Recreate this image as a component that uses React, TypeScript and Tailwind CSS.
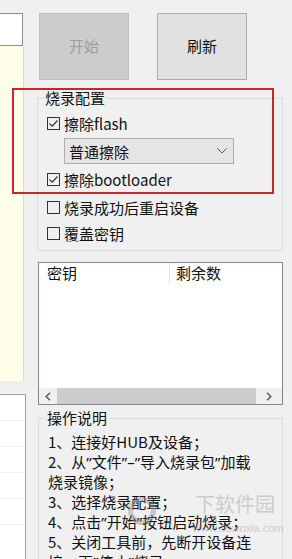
import React from "react";

const font = { fontFamily: '"Noto Sans CJK SC", "Noto Sans", sans-serif' };
const latin = { fontFamily: '"Noto Sans", "Liberation Sans", sans-serif' };

const Check = ({ checked }: { checked?: boolean }) => (
  <svg width="13" height="13" viewBox="0 0 13 13" className="shrink-0">
    <rect x="0.5" y="0.5" width="12" height="12" fill="none" stroke="#333" strokeWidth="1" />
    {checked && <path d="M2.5 6.5 L5.2 9.2 L10.5 3.5" fill="none" stroke="#333" strokeWidth="1.2" />}
  </svg>
);

const Row = ({ label, checked, h }: { label: string; checked?: boolean; h: string }) => (
  <div className={`flex items-center gap-[4px] pl-[9px] shrink-0 ${h}`}>
    <Check checked={checked} />
    <span className="text-[15px] leading-none text-[#111]">{label}</span>
  </div>
);

// narrow quote / dash like the original UI font
const Q = ({ c }: { c: string }) => <span style={latin}>{c}</span>;

export default function App() {
  return (
    <div
      className="w-[292px] h-[559px] bg-[#f0f0f0] flex overflow-hidden relative text-[15px] text-[#111]"
      style={font}
    >
      {/* left strip */}
      <div className="w-[26px] flex flex-col shrink-0">
        <div className="h-[13px] shrink-0" />
        <div className="h-[33px] w-[23px] shrink-0 bg-white border border-l-0 border-[#8c8c8c]" />
        <div className="h-[335px] w-[24px] shrink-0 bg-[#fffee8] border-r border-[#dadada]" />
        <div className="h-[13px] shrink-0" />
        <div className="flex-1 w-[26px] bg-white border-t border-r border-[#a0a0a0] flex flex-col">
          <div className="h-[26px] shrink-0 border-b border-[#f0f0f0]" />
          <div className="h-[26px] shrink-0 border-b border-[#f0f0f0]" />
          <div className="h-[26px] shrink-0 border-b border-[#f0f0f0]" />
          <div className="h-[26px] shrink-0 border-b border-[#f0f0f0]" />
          <div className="h-[26px] shrink-0 border-b border-[#f0f0f0]" />
        </div>
      </div>

      {/* right side */}
      <div className="flex-1 flex flex-col">
        <div className="h-[13px] shrink-0" />
        <div className="flex gap-[28px] pl-[13px] shrink-0">
          <div className="w-[90px] h-[67px] bg-[#cccccc] border border-[#bfbfbf] flex items-center justify-center text-[#9d9d9d]">
            开始
          </div>
          <div className="w-[90px] h-[67px] bg-[#e1e1e1] border border-[#adadad] flex items-center justify-center">
            刷新
          </div>
        </div>

        {/* 烧录配置 group */}
        <div className="relative shrink-0 mt-[18px] ml-[11px] w-[246px] h-[153px] border border-[#dcdcdc] flex flex-col">
          <span className="absolute left-[6px] top-[-10px] bg-[#f0f0f0] px-[1px] leading-[18px]">烧录配置</span>
          <div className="h-[12px] shrink-0" />
          <Row label="擦除flash" checked h="h-[24px]" />
          <div className="shrink-0 mt-[3px] ml-[26px] w-[170px] h-[26px] bg-[#e5e5e5] border border-[#acacac] flex items-center justify-between pl-[4px] pr-[6px]">
            <span className="leading-none">普通擦除</span>
            <svg width="10" height="6" viewBox="0 0 10 6">
              <path d="M0.5 0.5 L5 5 L9.5 0.5" fill="none" stroke="#555" strokeWidth="1" />
            </svg>
          </div>
          <div className="h-[3px] shrink-0" />
          <Row label="擦除bootloader" checked h="h-[24px]" />
          <div className="h-[4px] shrink-0" />
          <Row label="烧录成功后重启设备" h="h-[24px]" />
          <div className="h-[2px] shrink-0" />
          <Row label="覆盖密钥" h="h-[24px]" />
        </div>

        {/* list view */}
        <div className="shrink-0 mt-[11px] ml-[12px] w-[245px] h-[143px] bg-white border border-[#828790] flex flex-col">
          <div className="h-[21px] flex items-center shrink-0">
            <div className="w-[131px] pl-[8px] border-r border-[#e5e5e5] h-full flex items-center">密钥</div>
            <div className="pl-[6px]">剩余数</div>
          </div>
          <div className="flex-1" />
          <div className="h-[16px] shrink-0 bg-[#f0f0f0] flex items-center">
            <div className="w-[18px] flex items-center justify-center">
              <svg width="6" height="9" viewBox="0 0 6 9">
                <path d="M5 0.8 L1.2 4.5 L5 8.2" fill="none" stroke="#606060" strokeWidth="1.6" />
              </svg>
            </div>
            <div className="flex-1 h-full bg-[#cdcdcd]" />
            <div className="w-[26px] flex items-center justify-center">
              <svg width="6" height="9" viewBox="0 0 6 9">
                <path d="M1 0.8 L4.8 4.5 L1 8.2" fill="none" stroke="#606060" strokeWidth="1.6" />
              </svg>
            </div>
          </div>
        </div>

        {/* 操作说明 group */}
        <div className="relative shrink-0 mt-[13px] ml-[12px] w-[245px] h-[160px] border border-b-0 border-[#dcdcdc]">
          <span className="absolute left-[7px] top-[-10px] bg-[#f0f0f0] px-[1px] leading-[18px]">操作说明</span>
          <div className="pt-[13px] pl-[9px] leading-[20px] whitespace-nowrap">
            <div>1、连接好HUB及设备；</div>
            <div>
              2、从<Q c={"\u201D"} />文件<Q c={"\u201D"} />
              <Q c={"\u2013"} />
              <Q c={"\u201D"} />导入烧录包<Q c={"\u201D"} />加载
            </div>
            <div>烧录镜像；</div>
            <div>3、选择烧录配置；</div>
            <div>
              4、点击<Q c={"\u201D"} />开始<Q c={"\u201D"} />按钮启动烧录；
            </div>
            <div>5、关闭工具前，先断开设备连</div>
            <div>
              接，再<Q c={"\u201D"} />停止<Q c={"\u201D"} />烧录。
            </div>
          </div>
        </div>
      </div>

      {/* red annotation box */}
      <div className="absolute left-[12px] top-[88px] w-[262px] h-[106px] border-2 border-[#c8262a]" />

      {/* watermark */}
      <div className="absolute left-[128px] top-[497px] w-[28px] h-[28px] rounded-full border-[5px] border-[#8a8a8a] opacity-40" />
      <div className="absolute left-[195px] top-[494px] text-[20px] leading-none text-[#8a8a8a] opacity-35">
        下软件园
      </div>
      <div
        className="absolute left-[193px] top-[523px] text-[11px] leading-none text-[#8a8a8a] opacity-35"
        style={{ fontFamily: '"Liberation Sans", sans-serif' }}
      >
        www.downxia.com
      </div>
    </div>
  );
}
